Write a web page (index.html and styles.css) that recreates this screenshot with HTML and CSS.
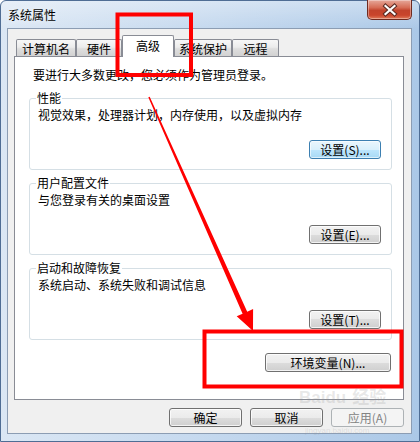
FILE: index.html
```html
<!DOCTYPE html>
<html lang="zh-CN">
<head>
<meta charset="utf-8">
<title>系统属性</title>
<link rel="stylesheet" href="styles.css">
</head>
<body>
<div class="window">
  <div class="titlebar">
    <span class="title">系统属性</span>
    <div class="close-btn">
      <svg width="45" height="20" viewBox="0 0 45 20">
        <path d="M18.5 7 L27.5 15 M27.5 7 L18.5 15" stroke="#5a2a22" stroke-width="4.2" stroke-linecap="square" fill="none"/>
        <path d="M18.5 7 L27.5 15 M27.5 7 L18.5 15" stroke="#ffffff" stroke-width="2.2" stroke-linecap="square" fill="none"/>
      </svg>
    </div>
  </div>
  <div class="client">
    <div class="tabs">
      <div class="tab t1">计算机名</div>
      <div class="tab t2">硬件</div>
      <div class="tab t3 active">高级</div>
      <div class="tab t4">系统保护</div>
      <div class="tab t5">远程</div>
    </div>
    <div class="panel">
      <p class="intro">要进行大多数更改，您必须作为管理员登录。</p>
      <div class="group">
        <span class="group-label">性能</span>
        <p class="group-desc">视觉效果，处理器计划，内存使用，以及虚拟内存</p>
        <div class="group-actions"><button class="btn btn-set btn-default">设置(S)...</button></div>
      </div>
      <div class="group">
        <span class="group-label">用户配置文件</span>
        <p class="group-desc">与您登录有关的桌面设置</p>
        <div class="group-actions"><button class="btn btn-set">设置(E)...</button></div>
      </div>
      <div class="group">
        <span class="group-label">启动和故障恢复</span>
        <p class="group-desc">系统启动、系统失败和调试信息</p>
        <div class="group-actions"><button class="btn btn-set">设置(T)...</button></div>
      </div>
      <div class="env-row"><button class="btn btn-env">环境变量(N)...</button></div>
    </div>
    <div class="dialog-buttons">
      <button class="btn btn-dlg">确定</button>
      <button class="btn btn-dlg">取消</button>
      <button class="btn btn-dlg" disabled>应用(A)</button>
    </div>
  </div>
  <svg class="annot" width="420" height="442" viewBox="0 0 420 442">
    <rect x="117.5" y="14.5" width="73.5" height="60.5" fill="none" stroke="#ff0000" stroke-width="4"/>
    <rect x="204.5" y="331.5" width="197" height="55" fill="none" stroke="#ff0000" stroke-width="4"/>
    <polygon points="148.3,97.3 149.7,96.7 247.2,311.7 253.1,309.1 253,331 236.7,316.3 242.6,313.7" fill="#ff0000"/>
  </svg>
  <div class="watermark wm-top">Bai<span class="wm-du">du</span>经验</div>
  <div class="watermark wm-bottom">jingyan.baidu.com</div>
</div>
</body>
</html>
```
FILE: styles.css
```css
* { box-sizing: border-box; }
html, body { margin: 0; padding: 0; }
body {
  width: 420px;
  height: 442px;
  overflow: hidden;
  background: #ffffff;
  font-family: "Noto Sans CJK SC", "Liberation Sans", sans-serif;
  font-size: 12px;
  color: #000;
}
.window {
  position: relative;
  width: 420px;
  height: 442px;
  display: flex;
  flex-direction: column;
  border: 1px solid #4f6d94;
  border-radius: 6px 6px 0 0;
  background:
    linear-gradient(180deg, rgba(255,255,255,0.35) 0px, rgba(255,255,255,0) 28px),
    linear-gradient(90deg, #dbe7f4 0%, #c7daef 45%, #abc8e7 100%);
}
.titlebar {
  height: 27px;
  flex: none;
  display: flex;
  align-items: flex-start;
  padding: 6px 7px 0 7px;
}
.title {
  line-height: 16px;
  font-size: 12px;
  color: #000;
  text-shadow: 0 0 6px rgba(255,255,255,0.9);
}
.close-btn {
  margin-left: auto;
  margin-top: -7px;
  width: 45px;
  height: 20px;
  border: 1px solid #6f2a1f;
  border-top: none;
  border-radius: 0 0 5px 5px;
  background: linear-gradient(180deg, #e6a89a 0%, #d66c55 40%, #c2432c 55%, #c9452c 80%, #e07a5a 100%);
  box-shadow: inset 0 0 0 1px rgba(255,255,255,0.35);
}
.close-btn svg { display: block; margin: -1px 0 0 -1px; }
.client {
  flex: none;
  height: 406px;
  margin: 0 7px 0 6px;
  background: #f0f0f0;
  border: 1px solid #8c9db3;
  padding: 6px 7px 6px 6px;
  display: flex;
  flex-direction: column;
}
.tabs {
  display: flex;
  align-items: flex-end;
  height: 21px;
  margin-left: 2px;
  flex: none;
}
.tab {
  height: 17px;
  border: 1px solid #898c95;
  border-bottom: none;
  border-radius: 2px 2px 0 0;
  background: linear-gradient(180deg, #f7f7f7 0%, #ececec 45%, #dedede 55%, #d2d2d2 100%);
  display: flex;
  align-items: center;
  justify-content: center;
  line-height: 14px;
  padding-top: 1px;
}
.t1 { width: 60px; }
.t2 { width: 46px; }
.t3 { width: 52px; }
.t4 { width: 58px; }
.t5 { width: 47px; }
.tab.active {
  height: 22px;
  margin-bottom: -1px;
  background: #ffffff;
  position: relative;
  z-index: 1;
  align-items: flex-start;
  padding-top: 3px;
}
.panel {
  flex: none;
  height: 344px;
  background: #ffffff;
  border: 1px solid #898c95;
  padding: 10px 11px 27px 14px;
  display: flex;
  flex-direction: column;
}
.intro {
  margin: 0 0 15px 4px;
  line-height: 16px;
  white-space: nowrap;
}
.group {
  position: relative;
  border: 1px solid #d5dfe5;
  border-radius: 3px;
  padding: 8px 10px 10px 8px;
  margin-bottom: 13px;
  height: 72px;
}
.group-label {
  position: absolute;
  top: -8px;
  left: 6px;
  padding: 0 1px;
  background: #ffffff;
  line-height: 14px;
}
.group-desc {
  margin: 0;
  line-height: 16px;
}
.group-actions {
  display: flex;
  justify-content: flex-end;
  margin-top: 17px;
}
.btn {
  font-family: "Noto Sans CJK SC", "Liberation Sans", sans-serif;
  font-size: 12px;
  color: #000;
  height: 19px;
  padding: 0;
  line-height: 15px;
  border: 1px solid #707070;
  border-radius: 3px;
  background: linear-gradient(180deg, #f2f2f2 0%, #ebebeb 50%, #dddddd 50%, #cfcfcf 100%);
  box-shadow: inset 0 0 0 1px rgba(255,255,255,0.75);
}
.btn-set { width: 72px; }
.btn-default {
  border-color: #3c7fb1;
  background: linear-gradient(180deg, #eaf6fd 0%, #d9f0fc 50%, #bee6fd 50%, #a7d9f5 100%);
  box-shadow: inset 0 0 0 1px rgba(255,255,255,0.6);
}
.env-row {
  display: flex;
  justify-content: flex-end;
  padding-right: 1px;
}
.btn-env { width: 126px; }
.dialog-buttons {
  display: flex;
  justify-content: flex-end;
  gap: 8px;
  margin-top: 8px;
  flex: none;
}
.btn-dlg { width: 73px; }
.btn-dlg:disabled {
  color: #838383;
  border-color: #adb2b5;
  background: #f4f4f4;
  box-shadow: none;
}
.annot {
  position: absolute;
  left: -1px;
  top: -1px;
  pointer-events: none;
}
.watermark {
  position: absolute;
  pointer-events: none;
  color: rgba(150,150,150,0.22);
  white-space: nowrap;
}
.wm-top {
  left: 298px;
  top: 388px;
  font-family: "Liberation Sans", "Noto Sans CJK SC", sans-serif;
  font-weight: bold;
  font-size: 17px;
  line-height: 18px;
}
.wm-du { margin-right: 6px; }
.wm-bottom {
  left: 304px;
  top: 426px;
  font-family: "Liberation Sans", sans-serif;
  font-size: 8px;
  line-height: 8px;
}
```
